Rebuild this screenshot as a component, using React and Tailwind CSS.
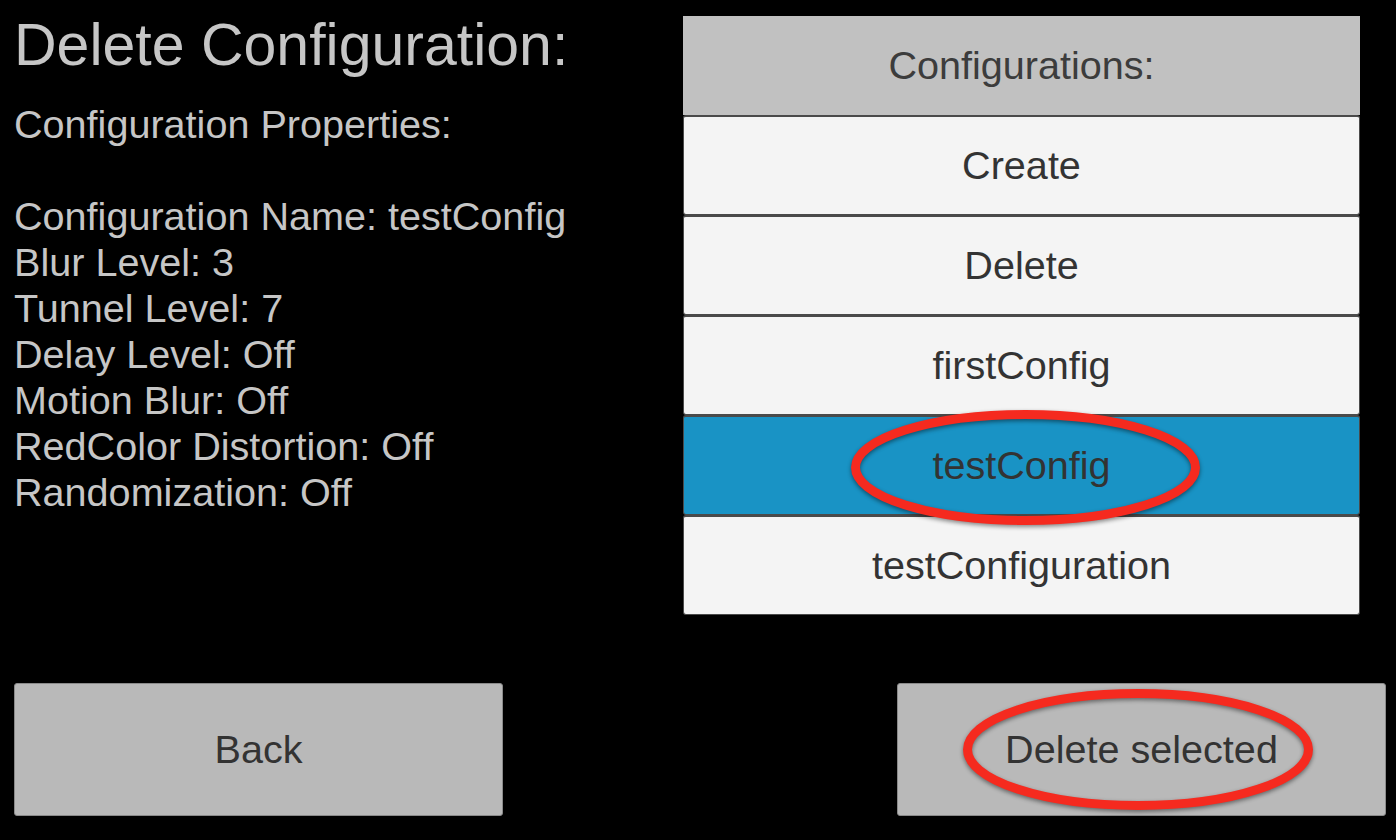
import { useState } from 'react';

const configs = ['Create', 'Delete', 'firstConfig', 'testConfig', 'testConfiguration'];

const properties = [
  'Configuration Name: testConfig',
  'Blur Level: 3',
  'Tunnel Level: 7',
  'Delay Level: Off',
  'Motion Blur: Off',
  'RedColor Distortion: Off',
  'Randomization: Off',
];

export default function App() {
  const [selected, setSelected] = useState('testConfig');

  return (
    <div className="relative w-[1396px] h-[840px] bg-black overflow-hidden font-[family-name:Liberation_Sans,Arial,sans-serif]">
      <div className="flex h-[683px]">
        {/* left: properties of the selected config */}
        <div className="w-[683px] pl-[14px] pt-[16px] text-[#c6c6c6]">
          <h1 className="text-[59px] leading-[58px]">Delete Configuration:</h1>
          <div className="mt-[27px] text-[39.6px] leading-[46px]">
            <p>Configuration Properties:</p>
            <p className="h-[46px]"></p>
            {properties.map(p => (
              <p key={p}>{p}</p>
            ))}
          </div>
        </div>

        {/* right: config list */}
        <div className="w-[677px] pt-[16px]">
          <div className="h-[99px] bg-[#c1c1c1] flex items-center justify-center text-[39.6px] text-[#3c3c3c]">
            Configurations:
          </div>
          {configs.map(name => (
            <button
              key={name}
              onClick={() => setSelected(name)}
              className={`block w-full h-[100px] border-t-[2px] border-b border-x border-[#4a4a4a] rounded-[3px] text-[39.6px] text-[#333333] ${selected === name ? 'bg-[#1993c5]' : 'bg-[#f4f4f4]'}`}
            >
              {name}
            </button>
          ))}
        </div>
      </div>

      <div className="flex justify-between pl-[14px] pr-[10px]">
        <button className="w-[489px] h-[133px] bg-[#b9b9b9] border border-[#8a8a8a] rounded-[3px] text-[39.6px] text-[#333333]">
          Back
        </button>
        <button className="w-[489px] h-[133px] bg-[#b9b9b9] border border-[#8a8a8a] rounded-[3px] text-[39.6px] text-[#333333]">
          Delete selected
        </button>
      </div>

      {/* annotation marks */}
      <svg className="absolute inset-0 pointer-events-none drop-shadow-[0_2px_2px_rgba(0,0,0,0.45)]" width="1396" height="840">
        <ellipse cx="1025.5" cy="467.5" rx="170" ry="53" fill="none" stroke="#f52a1f" strokeWidth="9" />
        <ellipse cx="1138" cy="749.5" rx="170.5" ry="56" fill="none" stroke="#f52a1f" strokeWidth="9" />
      </svg>
    </div>
  );
}
